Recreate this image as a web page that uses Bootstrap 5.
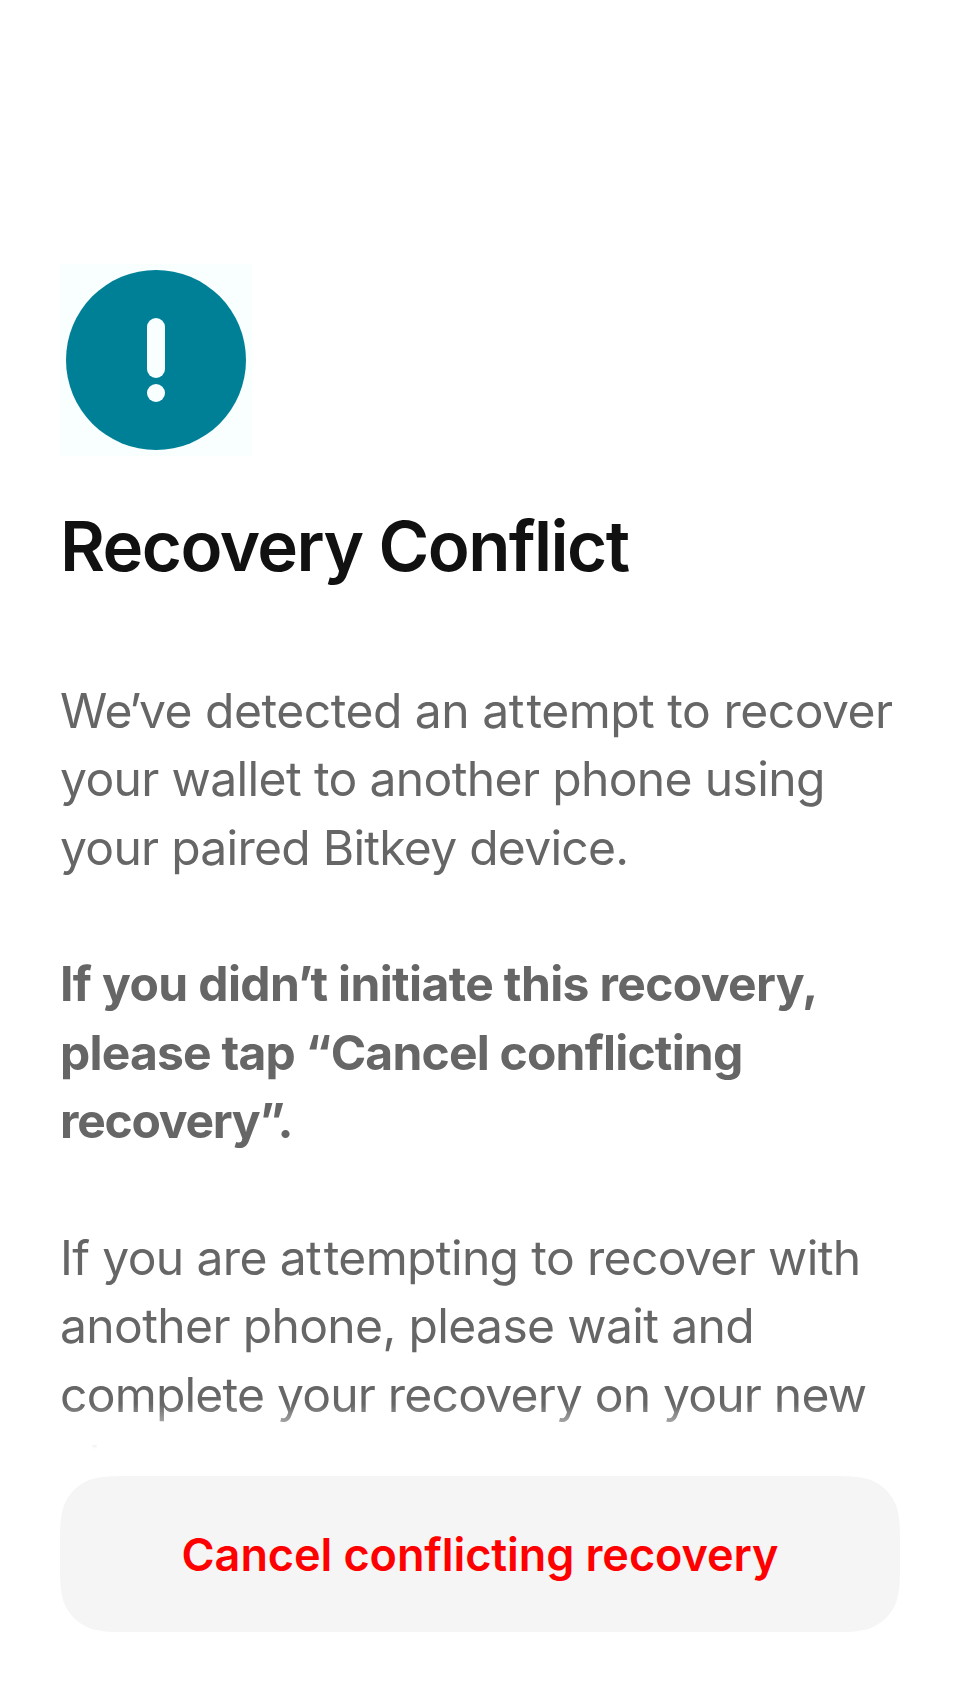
<!DOCTYPE html>
<html lang="en"><head><meta charset="utf-8"><meta name="viewport" content="width=device-width, initial-scale=1"><title>Recovery Conflict</title>
<link rel="stylesheet" href="https://cdn.jsdelivr.net/npm/bootstrap@5.3.0/dist/css/bootstrap.min.css">
<style>
body{font-family:Inter,sans-serif;background:#fff}
.screen{height:1704px;padding:264px 60px 72px}
.alert-icon{width:192px;height:192px;background:#f9feff;flex:none}
h1{font-size:69px;line-height:90px;font-weight:600;letter-spacing:-1.55px;color:#111;margin:45px 0 0}
.scroller{margin-top:85.8px;height:772.2px;-webkit-mask-image:linear-gradient(#000 727px,transparent 772px);mask-image:linear-gradient(#000 727px,transparent 772px)}
.scroller p{font-size:48px;line-height:68.4px;color:#666;margin:0 0 68.4px;white-space:nowrap;letter-spacing:-.72px;font-feature-settings:"calt" 0,"liga" 0}
.scroller .fw-bold{letter-spacing:-.8px}
.track-1{letter-spacing:-.48px}
.track-2{letter-spacing:-.63px}
.track-3{letter-spacing:-.78px}
.track-tight{letter-spacing:-1.25px}
.apos{margin:0 -2px 0 -3px}
.wide-t{letter-spacing:2px}
.fw-bold .apos{margin:0 -1.5px}
.cancel,.cancel:hover{height:156px;background:#f5f5f5;color:#f00;font-size:45px;font-weight:600;letter-spacing:-.08px;border:0;border-radius:0;padding:7px 0 6px;clip-path:path("M73.4 0H766.6C787.7 0 798.3 0 809.7 3.6C822.1 8.1 831.9 17.9 836.4 30.3C840 41.7 840 52.3 840 73.4V82.6C840 103.7 840 114.3 836.4 125.7C831.9 138.1 822.1 147.9 809.7 152.4C798.3 156 787.7 156 766.6 156H73.4C52.3 156 41.7 156 30.3 152.4C17.9 147.9 8.1 138.1 3.6 125.7C0 114.3 0 103.7 0 82.6V73.4C0 52.3 0 41.7 3.6 30.3C8.1 17.9 17.9 8.1 30.3 3.6C41.7 0 52.3 0 73.4 0Z")}
</style></head><body>
<main class="screen d-flex flex-column overflow-hidden">
<svg class="alert-icon" viewBox="0 0 192 192" aria-hidden="true"><circle cx="96" cy="96" r="90" fill="#008097"/><path d="M96 63v42" stroke="#f9feff" stroke-width="18" stroke-linecap="round"/><circle cx="96" cy="129" r="9" fill="#f9feff"/></svg>
<h1>Recovery Conflict</h1>
<div class="scroller overflow-hidden flex-shrink-0">
<p><span class="track-1">We<span class="apos">’</span>ve detected an a<span class="wide-t">t</span>tempt to recover</span><br><span class="track-2">your wallet to another phone using</span><br>your paired Bitkey device.</p>
<p class="fw-bold"><span class="track-2">If you didn<span class="apos">’</span>t initiate this recovery,</span><br>please tap “Cancel conflicting<br><span class="track-tight">recovery”.</span></p>
<p><span class="track-2">If you are a<span class="wide-t">t</span>tempting to recover with<br>another phone, please wait and</span><br><span class="track-3">complete your recovery on your new</span><br>phone.</p>
</div>
<button class="btn cancel w-100 mt-auto flex-shrink-0" type="button">Cancel conflicting recovery</button>
</main>
<script src="https://cdn.jsdelivr.net/npm/bootstrap@5.3.0/dist/js/bootstrap.bundle.min.js"></script>
</body></html>
